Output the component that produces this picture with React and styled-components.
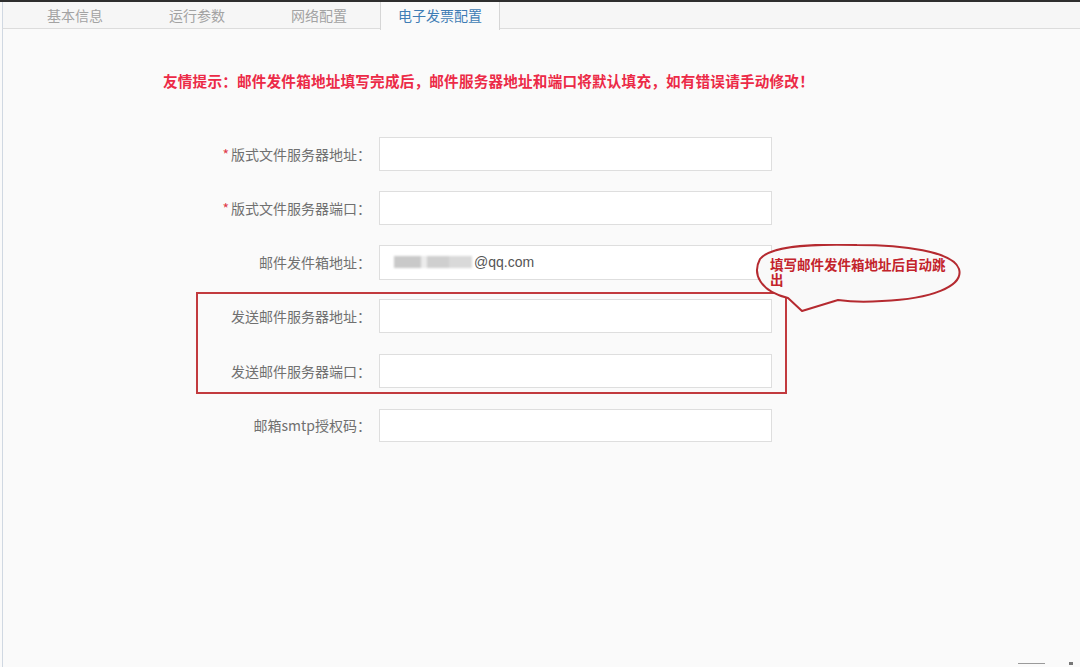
import React from "react";
import styled, { createGlobalStyle } from "styled-components";

const Global = createGlobalStyle`
  html, body { margin: 0; padding: 0; background: #fafafa; }
  body { font-family: "Microsoft YaHei", "Noto Sans CJK SC", "Noto Sans", sans-serif; }
  * { box-sizing: border-box; }
`;

const Page = styled.div`
  position: relative;
  width: 1080px;
  height: 667px;
  overflow: hidden;
  background: #fafafa;
  border-top: 2px solid #2e2e2e;
`;

const TabBar = styled.div`
  display: flex;
  height: 27px;
  padding-left: 11px;
  background: #f6f6f6;
  border-bottom: 1px solid #dcdcdc;
  border-left: 1px solid #d0d8e2;
  margin-left: 2px;
`;

const Tab = styled.div`
  width: ${(p) => (p.$active ? "120px" : "122px")};
  display: flex;
  align-items: center;
  justify-content: center;
  font-size: 14px;
  color: ${(p) => (p.$active ? "#3f7db5" : "#a3a3a3")};
  background: ${(p) => (p.$active ? "#fafafa" : "transparent")};
  border-left: ${(p) => (p.$active ? "1px solid #d6d6d6" : "none")};
  border-right: ${(p) => (p.$active ? "1px solid #d6d6d6" : "none")};
  margin-bottom: ${(p) => (p.$active ? "-1px" : "0")};
  height: ${(p) => (p.$active ? "28px" : "27px")};
  padding-bottom: 2px;
`;

const Body = styled.div`
  margin-left: 2px;
  border-left: 1px solid #d0d8e2;
  height: 640px;
  padding-top: 42px;
`;

const Hint = styled.div`
  padding-left: 160px;
  font-size: 14.6px;
  line-height: 20px;
  font-weight: bold;
  color: #ec2a47;
  letter-spacing: 0.2px;
`;

const Form = styled.div`
  margin-top: 46px;
  margin-left: 193px;
  width: 591px;
  display: flex;
  flex-direction: column;
  gap: 20px;
`;

const Row = styled.div`
  display: flex;
  align-items: center;
  height: 34px;
  padding-right: ${(p) => (p.$inGroup ? "13px" : "15px")};
`;

const Label = styled.div`
  flex: 1;
  text-align: right;
  padding-right: 8px;
  font-size: 14px;
  color: #707070;
  white-space: nowrap;
`;

const Star = styled.span`
  color: #e03a4a;
  margin-right: 2px;
`;

const Input = styled.div`
  width: 393px;
  height: ${(p) => (p.$h ? p.$h : "34px")};
  background: #ffffff;
  border: 1px solid #dedede;
  display: flex;
  align-items: center;
  padding-left: 14px;
  font-size: 14px;
  font-family: "Liberation Sans", "Noto Sans", sans-serif;
  color: #555;
`;

const Blurred = styled.span`
  display: inline-block;
  width: 78px;
  height: 12px;
  margin-right: 2px;
  background: linear-gradient(90deg, #c9c9c9 0 35%, #ececec 35% 42%, #cfcfcf 42% 70%, #d9d9d9 70% 100%);
  filter: blur(1.2px);
`;

const Group = styled.div`
  border: 2px solid #c23a3e;
  padding: 5px 0 4px;
  margin: -7px 0 -6px;
  display: flex;
  flex-direction: column;
  gap: 21px;
`;

const Callout = styled.div`
  position: absolute;
  left: 752px;
  top: 242px;
  width: 214px;
  height: 72px;
`;

const CalloutText = styled.div`
  position: absolute;
  left: 18px;
  top: 13px;
  width: 182px;
  font-size: 13.5px;
  line-height: 15px;
  font-weight: bold;
  color: #c3232b;
`;

const Corner = styled.div`
  position: absolute;
  right: 0;
  bottom: 2px;
  width: 62px;
  display: flex;
  align-items: center;
  gap: 24px;
`;

const Dash = styled.span`
  width: 27px;
  height: 1px;
  background: #9a9a9a;
`;

const Dot = styled.span`
  width: 4px;
  height: 3px;
  background: #777;
`;

export default function App() {
  return (
    <>
      <Global />
      <Page>
        <TabBar>
          <Tab>基本信息</Tab>
          <Tab>运行参数</Tab>
          <Tab>网络配置</Tab>
          <Tab $active>电子发票配置</Tab>
        </TabBar>
        <Body>
          <Hint>友情提示：邮件发件箱地址填写完成后，邮件服务器地址和端口将默认填充，如有错误请手动修改！</Hint>
          <Form>
            <Row>
              <Label><Star>*</Star>版式文件服务器地址：</Label>
              <Input />
            </Row>
            <Row>
              <Label><Star>*</Star>版式文件服务器端口：</Label>
              <Input />
            </Row>
            <Row>
              <Label>邮件发件箱地址：</Label>
              <Input $h="35px"><Blurred />@qq.com</Input>
            </Row>
            <Group>
              <Row $inGroup>
                <Label>发送邮件服务器地址：</Label>
                <Input />
              </Row>
              <Row $inGroup>
                <Label>发送邮件服务器端口：</Label>
                <Input />
              </Row>
            </Group>
            <Row>
              <Label>邮箱smtp授权码：</Label>
              <Input $h="33px" />
            </Row>
          </Form>
        </Body>
        <Callout>
          <svg width="214" height="72" viewBox="0 0 214 72">
            <path
              d="M 36 54 C 8 47 0 30 8 15 C 20 0 70 0 105 1 C 150 1 201 7 207 25 C 212 42 180 55 130 57 C 115 58 100 58 86 56 L 50 67 L 36 54 Z"
              fill="#f9f9f9"
              stroke="#b52a30"
              strokeWidth="2"
              strokeLinejoin="round"
            />
          </svg>
          <CalloutText>填写邮件发件箱地址后自动跳出</CalloutText>
        </Callout>
        <Corner>
          <Dash />
          <Dot />
        </Corner>
      </Page>
    </>
  );
}
